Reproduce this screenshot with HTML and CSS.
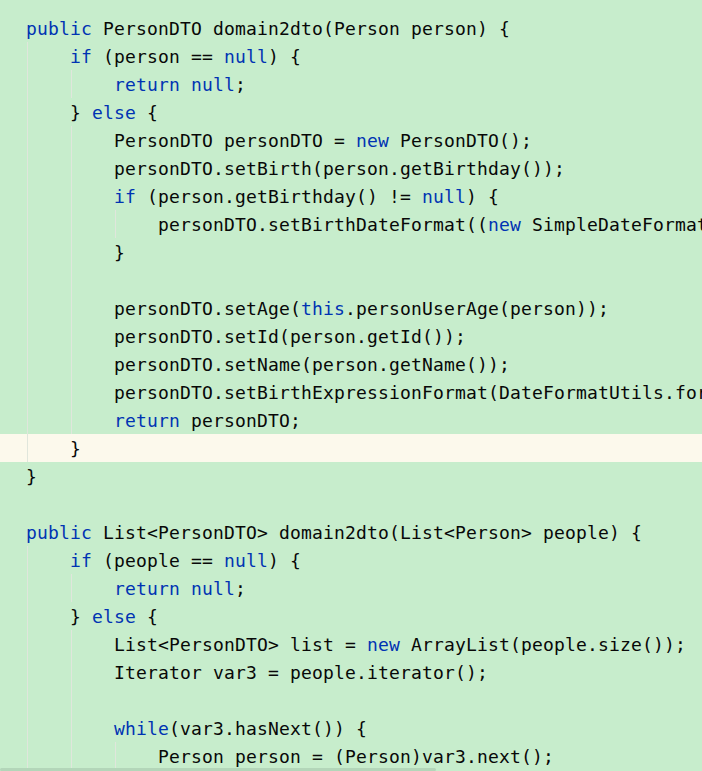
FILE: index.html
```html
<!DOCTYPE html>
<html>
<head>
<meta charset="utf-8">
<link rel="stylesheet" href="styles.css">
</head>
<body>
<div class="editor">
<div class="code">
<div class="ln"><span class="kw">public</span> PersonDTO domain2dto(Person person) {</div>
<div class="ln"><span class="ind g"></span><span class="kw">if</span> (person == <span class="kw">null</span>) {</div>
<div class="ln"><span class="ind g"></span><span class="ind g"></span><span class="kw">return null</span>;</div>
<div class="ln"><span class="ind g"></span>} <span class="kw">else</span> {</div>
<div class="ln"><span class="ind g"></span><span class="ind g"></span>PersonDTO personDTO = <span class="kw">new</span> PersonDTO();</div>
<div class="ln"><span class="ind g"></span><span class="ind g"></span>personDTO.setBirth(person.getBirthday());</div>
<div class="ln"><span class="ind g"></span><span class="ind g"></span><span class="kw">if</span> (person.getBirthday() != <span class="kw">null</span>) {</div>
<div class="ln"><span class="ind g"></span><span class="ind g"></span><span class="ind g"></span>personDTO.setBirthDateFormat((<span class="kw">new</span> SimpleDateFormat(<span class="str">"yyyy-MM-dd"</span>)).format(person.getBirthday()));</div>
<div class="ln"><span class="ind g"></span><span class="ind g"></span>}</div>
<div class="ln"><span class="ind g"></span><span class="ind g"></span></div>
<div class="ln"><span class="ind g"></span><span class="ind g"></span>personDTO.setAge(<span class="kw">this</span>.personUserAge(person));</div>
<div class="ln"><span class="ind g"></span><span class="ind g"></span>personDTO.setId(person.getId());</div>
<div class="ln"><span class="ind g"></span><span class="ind g"></span>personDTO.setName(person.getName());</div>
<div class="ln"><span class="ind g"></span><span class="ind g"></span>personDTO.setBirthExpressionFormat(DateFormatUtils.format(person.getBirthday()));</div>
<div class="ln"><span class="ind g"></span><span class="ind g"></span><span class="kw">return</span> personDTO;</div>
<div class="ln cur"><span class="ind g"></span>}</div>
<div class="ln">}</div>
<div class="ln"></div>
<div class="ln"><span class="kw">public</span> List&lt;PersonDTO&gt; domain2dto(List&lt;Person&gt; people) {</div>
<div class="ln"><span class="ind g"></span><span class="kw">if</span> (people == <span class="kw">null</span>) {</div>
<div class="ln"><span class="ind g"></span><span class="ind g"></span><span class="kw">return null</span>;</div>
<div class="ln"><span class="ind g"></span>} <span class="kw">else</span> {</div>
<div class="ln"><span class="ind g"></span><span class="ind g"></span>List&lt;PersonDTO&gt; list = <span class="kw">new</span> ArrayList(people.size());</div>
<div class="ln"><span class="ind g"></span><span class="ind g"></span>Iterator var3 = people.iterator();</div>
<div class="ln"><span class="ind g"></span><span class="ind g"></span></div>
<div class="ln"><span class="ind g"></span><span class="ind g"></span><span class="kw">while</span>(var3.hasNext()) {</div>
<div class="ln"><span class="ind g"></span><span class="ind g"></span><span class="ind g"></span>Person person = (Person)var3.next();</div>
<div class="ln"><span class="ind g"></span><span class="ind g"></span><span class="ind g"></span>list.add(<span class="kw">this</span>.domain2dto(person));</div>
</div>
<div class="hscroll"></div>
</div>
</body>
</html>
```

FILE: styles.css
```css
html, body {
  margin: 0;
  padding: 0;
  background: #c7edcc;
}
.editor {
  position: relative;
  width: 702px;
  height: 771px;
  overflow: hidden;
  background: #c7edcc;
}
.code {
  padding-top: 14px;
  font-family: "DejaVu Sans Mono", "Liberation Mono", monospace;
  font-size: 18px;
  letter-spacing: 0.164px;
  color: #080808;
}
.ln {
  height: 28px;
  line-height: 30px;
  padding-left: 26px;
  white-space: pre;
}
.ln.cur {
  background: #fcf9ec;
}
.ind {
  display: inline-block;
  width: 44px;
  height: 28px;
  vertical-align: top;
}
.ind.g {
  background: linear-gradient(to right, transparent 1px, #e0e6dc 1px, #e0e6dc 2px, transparent 2px);
}
.kw {
  color: #0033b3;
}
.str {
  color: #067d17;
}
.hscroll {
  position: absolute;
  left: 0;
  bottom: 0;
  width: 436px;
  height: 3px;
  border-radius: 2px;
  background: #b3d6b9;
}
```
